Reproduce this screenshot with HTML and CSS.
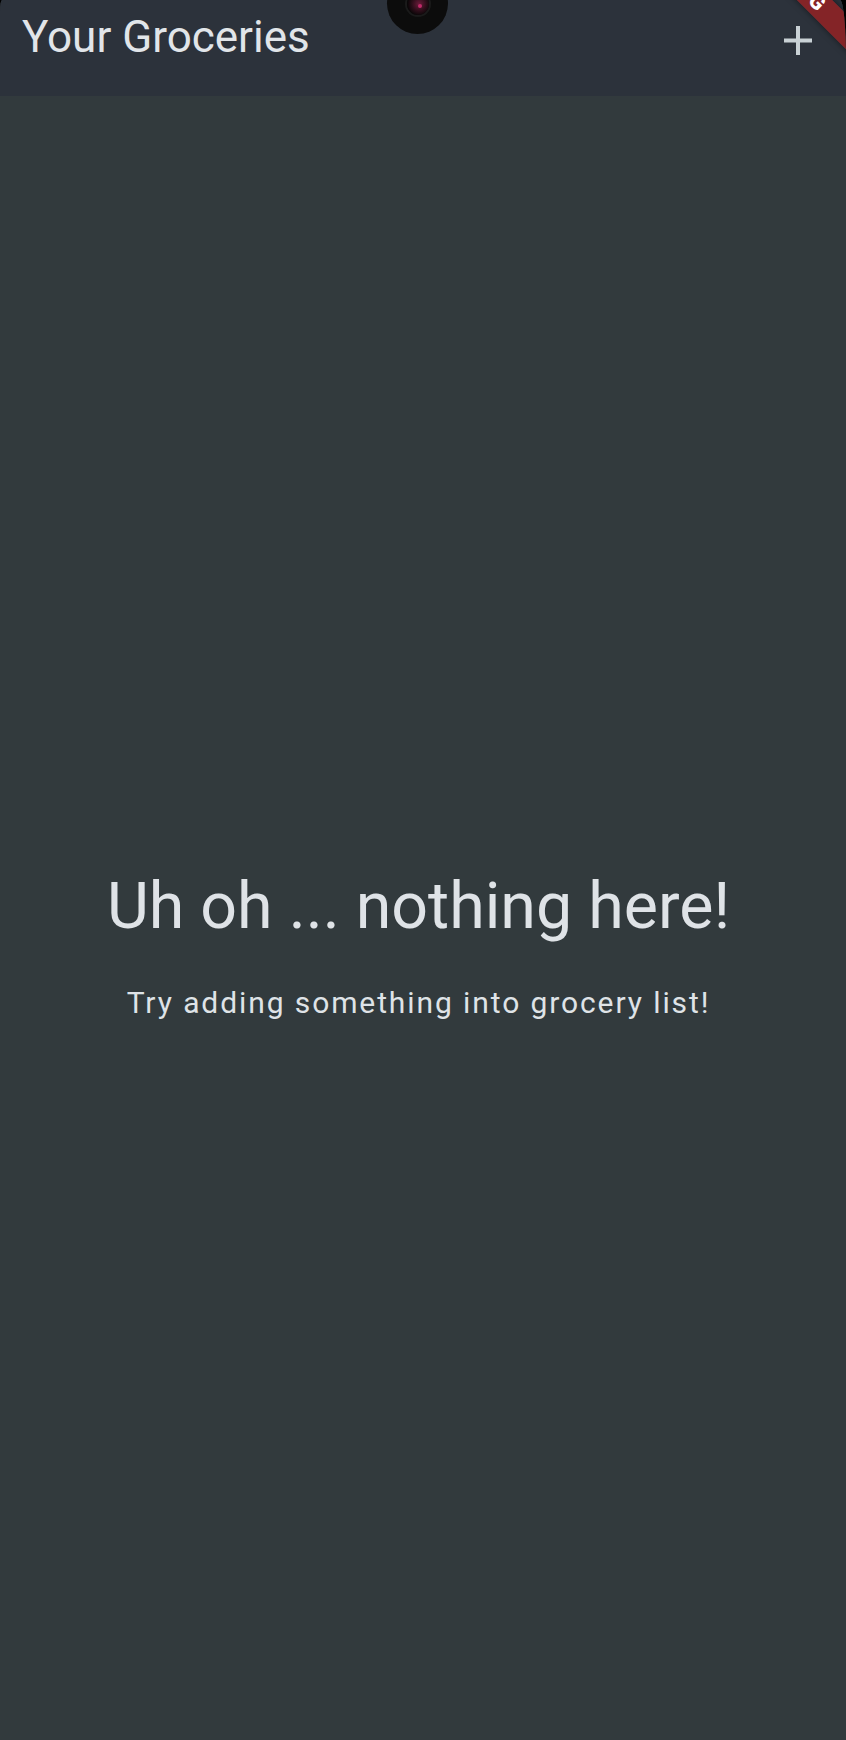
FILE: index.html
```html
<!DOCTYPE html>
<html lang="en">
<head>
<meta charset="utf-8">
<title>Your Groceries</title>
<link rel="stylesheet" href="styles.css">
</head>
<body>
<div class="screen">
  <header class="appbar">
    <h1 class="title">Your Groceries</h1>
    <button class="add-btn" aria-label="Add item">
      <svg width="28" height="30" viewBox="0 0 28 30" aria-hidden="true">
        <rect x="12" y="0" width="4" height="29" fill="currentColor"/>
        <rect x="0" y="12.5" width="28" height="4" fill="currentColor"/>
      </svg>
    </button>
  </header>
  <main class="content">
    <h2 class="headline">Uh oh ... nothing here!</h2>
    <p class="subtitle">Try adding something into grocery list!</p>
  </main>
  <div class="camera"><div class="lens"><div class="glint"></div></div></div>
  <div class="debug-banner">DEBUG</div>
</div>
</body>
</html>
```

FILE: styles.css
```css
html, body {
  margin: 0;
  padding: 0;
  background: #000;
}

.screen {
  position: relative;
  width: 846px;
  height: 1740px;
  overflow: hidden;
  background: #323a3d;
  border-top-left-radius: 2px 12px;
  border-top-right-radius: 6px 60px;
  font-family: Roboto, "Noto Sans", sans-serif;
  color: #dfe3e7;
}

.appbar {
  height: 96px;
  background: #2c323b;
  display: flex;
  justify-content: space-between;
  align-items: flex-start;
  box-sizing: border-box;
  padding: 12px 34px 0 22px;
}

.title {
  margin: 0;
  font-size: 44px;
  font-weight: 400;
  line-height: 1.172;
  color: #e1e5e9;
  letter-spacing: 0;
}

.add-btn {
  margin-top: 14px;
  padding: 0;
  border: 0;
  background: none;
  color: #c9d1d5;
  display: flex;
}

.content {
  height: 1644px;
  box-sizing: border-box;
  padding: 53px 9px 0 0;
  display: flex;
  flex-direction: column;
  align-items: center;
  justify-content: center;
  text-align: center;
}

.headline {
  margin: 0;
  font-size: 64.5px;
  font-weight: 400;
  line-height: 1.172;
  color: #dfe3e7;
}

.subtitle {
  margin: 40px 0 0;
  font-size: 30px;
  font-weight: 400;
  line-height: 1.172;
  letter-spacing: 1.9px;
  color: #dfe3e7;
}

.camera {
  position: absolute;
  left: 387px;
  top: -27px;
  width: 61px;
  height: 61px;
  border-radius: 50%;
  background: #0c0c0c;
  display: flex;
  align-items: center;
  justify-content: center;
}

.lens {
  width: 22px;
  height: 22px;
  border-radius: 50%;
  background: radial-gradient(circle at 55% 50%, #6a1b3a 0%, #2a0d18 45%, #050505 75%);
  box-shadow: 0 0 0 2px #1a1a1a;
  position: relative;
}

.glint {
  position: absolute;
  left: 11px;
  top: 11px;
  width: 4px;
  height: 4px;
  border-radius: 50%;
  background: #c02a6a;
}

.debug-banner {
  position: absolute;
  left: 698px;
  top: -29px;
  width: 200px;
  height: 25px;
  transform: rotate(45deg);
  background: rgba(183, 28, 28, 0.63);
  box-shadow: 0 0 6px rgba(0, 0, 0, 0.5);
  color: #fff;
  font-family: Roboto, "Noto Sans", sans-serif;
  font-weight: 900;
  font-size: 21px;
  line-height: 25px;
  text-align: center;
  letter-spacing: 0;
}
```
